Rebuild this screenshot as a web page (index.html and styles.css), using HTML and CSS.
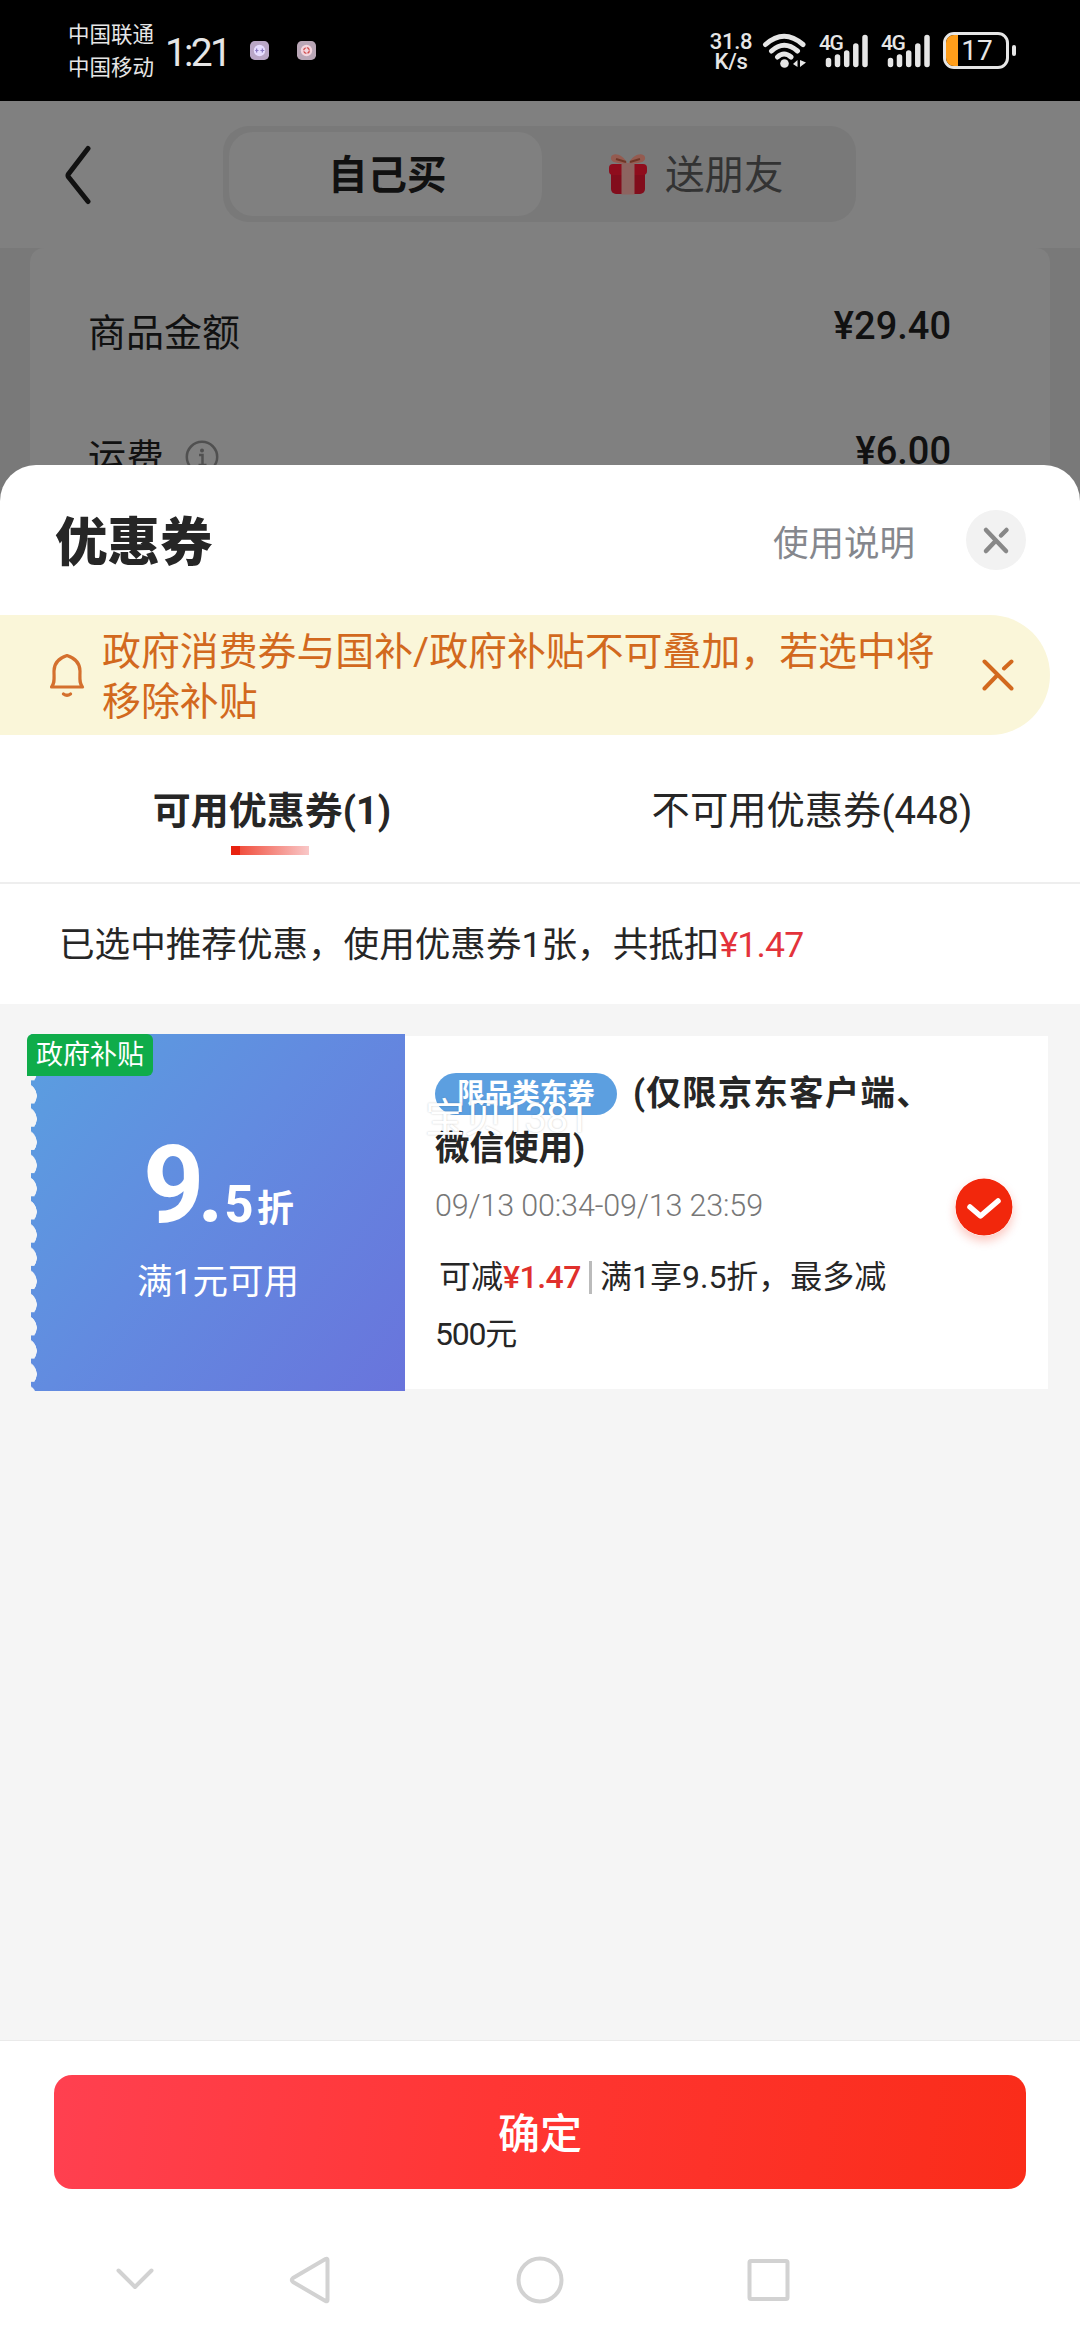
FILE: index.html
```html
<!DOCTYPE html>
<html lang="zh-CN">
<head>
<meta charset="utf-8">
<title>优惠券</title>
<link rel="stylesheet" href="styles.css">
</head>
<body>
<div class="status">
  <div class="carriers"><span>中国联通</span><span>中国移动</span></div>
  <div class="clock">1:21</div>
  <svg class="app" viewBox="0 0 20 20"><rect width="20" height="20" rx="5" fill="#b9a6c6"/><circle cx="10" cy="10" r="6" fill="#e6dcff"/><path d="M7 8v4M5.500 10h3.400M13 8v4M11 10h4" stroke="#8a79c0" stroke-width="1.300"/></svg>
  <svg class="app app-second" viewBox="0 0 20 20"><rect width="20" height="20" rx="5" fill="#b9a6b6"/><circle cx="10" cy="10" r="6" fill="#f3d5de"/><circle cx="10" cy="10" r="3" fill="none" stroke="#cf4a4a" stroke-width="1.400" stroke-dasharray="3.500 1.200"/></svg>
  <div class="speed"><span>31.8</span><span>K/s</span></div>
  <svg class="wifi" viewBox="0 0 46 36" fill="none" stroke="#e6e6e6" stroke-width="5" stroke-linecap="round"><path d="M3.500 11.500Q22 -5 41 11.500M9.500 18Q22 6.500 35.500 18M15.500 24Q22 18 29 24"/><circle cx="22.500" cy="30.500" r="4.300" fill="#e6e6e6" stroke="none"/><path d="M35.500 27v7l-4.500-3zM38 27v7l6-4.500z" fill="#e6e6e6" stroke="none"/></svg>
  <div class="cell"><span>4G</span><svg viewBox="0 0 44 34" stroke="#e6e6e6" stroke-width="5.500" stroke-linecap="round"><path d="M3.500 26.500v4M12.500 23v7.500M21.700 19v11.500M30.800 12v18.500M40 3.500v27"/></svg></div>
  <div class="cell"><span>4G</span><svg viewBox="0 0 44 34" stroke="#e6e6e6" stroke-width="5.500" stroke-linecap="round"><path d="M3.500 26.500v4M12.500 23v7.500M21.700 19v11.500M30.800 12v18.500M40 3.500v27"/></svg></div>
  <div class="battery"><div class="shell"><i></i><b>17</b></div><em></em></div>
</div>

<div class="page">
  <div class="head">
    <svg class="back" viewBox="0 0 28 60" fill="none" stroke="#111" stroke-width="5" stroke-linecap="round" stroke-linejoin="round"><path d="M24 3.500 4.500 29Q3.500 30.500 4.500 32L24 56.500"/></svg>
    <div class="segment">
      <div class="seg seg-on"><span>自己买</span></div>
      <div class="seg">
        <svg class="gift" viewBox="0 0 40 44"><rect x="3" y="17" width="34" height="25" rx="5" fill="#820d1c"/><rect x="1" y="12" width="38" height="11" rx="4" fill="#8f0d1d"/><rect x="13.500" y="11" width="13" height="31.500" fill="#8d6460"/><path d="M19 11C8 12 2 10 3 5 5 0 15 2 19 11ZM21 11c11 1 17-1 16-6-2-5-12-3-16 6Z" fill="#945b50"/><path d="M18 10 8 7M22 10l10-3" stroke="#6f3526" stroke-width="2"/></svg>
        <span>送朋友</span>
      </div>
    </div>
  </div>
  <div class="bill">
    <div class="row"><span class="label">商品金额</span><span class="amount">¥29.40</span></div>
    <div class="row row-ship"><span class="label">运费</span><svg class="info" viewBox="0 0 34 34" fill="none" stroke="#505050" stroke-width="2.500"><circle cx="17" cy="17" r="15.200"/><path d="M14 15h3.500v10M13.500 25h8"/><circle cx="17" cy="10.500" r="2" fill="#505050" stroke="none"/></svg><span class="amount">¥6.00</span></div>
  </div>
</div>

<div class="sheet">
  <div class="title-row">
    <h1>优惠券</h1>
    <span class="help">使用说明</span>
    <div class="close"><svg viewBox="0 0 60 60" fill="none" stroke="#888" stroke-width="4.500" stroke-linecap="round"><path d="M20 20 40 41M20 41 30 30.500M35 25.500 40.500 20"/></svg></div>
  </div>

  <div class="notice">
    <svg class="bell" viewBox="0 0 36 44" fill="none" stroke="#d4702e" stroke-width="3.200" stroke-linejoin="round" stroke-linecap="round"><path d="M2.500 34C6 30 5 26 5 18 5 8 12 4.500 18 2.500 24 4.500 31 8 31 18c0 8-1 12 2.500 16Z"/><path d="M14.500 41q3.500 2.500 7 0"/></svg>
    <p>政府消费券与国补/政府补贴不可叠加，若选中将<br>移除补贴</p>
    <svg class="dismiss" viewBox="0 0 32 32" fill="none" stroke="#d2691e" stroke-width="4" stroke-linecap="round"><path d="M2.500 2.500 29.500 29.500M2.500 29.500 15 16.500M22 9.500 29.500 2.500"/></svg>
  </div>

  <div class="tabs">
    <div class="tab tab-on"><span>可用优惠券(1)</span><i></i></div>
    <div class="tab"><span>不可用优惠券(448)</span></div>
  </div>

  <div class="summary">已选中推荐优惠，使用优惠券1张，共抵扣<b>¥1.47</b></div>

  <div class="list">
    <div class="coupon">
      <div class="face">
        <span class="badge">政府补贴</span>
        <div class="rate"><span class="big">9</span><span class="dot">.</span><span class="mid">5</span><span class="unit">折</span></div>
        <div class="limit">满1元可用</div>
      </div>
      <div class="detail">
        <div class="text">
          <div class="name"><span class="pill">限品类东券</span><span class="scope">(仅限京东客户端、</span><br>微信使用)</div>
          <div class="date">09/13 00:34-09/13 23:59</div>
          <div class="save"><span class="can">可减</span><b>¥1.47</b><i></i>满1享9.5折，最多减<br><span class="cap">500元</span></div>
        </div>
        <svg class="check" viewBox="0 0 58 58"><circle cx="29" cy="29" r="28.500" fill="#f2270c"/><path d="M15 29 25.500 38 43 23" fill="none" stroke="#fff" stroke-width="5.500" stroke-linecap="round" stroke-linejoin="round"/></svg>
        <span class="mark">宝贝138T</span>
      </div>
    </div>
  </div>

  <div class="footer"><div class="confirm">确定</div></div>
  <div class="nav">
    <svg viewBox="0 0 60 60"><path d="M13.500 20.500 30 37 46.500 20.500"/></svg>
    <svg viewBox="0 0 60 60"><path d="M47.500 10V50Q47.500 52 45.500 51L13 32Q10.500 30 13 28L45.500 9Q47.500 8 47.500 10Z"/></svg>
    <svg viewBox="0 0 60 60"><circle cx="30" cy="30" r="21.500"/></svg>
    <svg viewBox="0 0 60 60"><rect x="10.500" y="11" width="38" height="38" rx="1.500"/></svg>
  </div>
</div>
</body>
</html>
```
FILE: styles.css
```css
* { box-sizing: border-box; }
body {
  margin: 0;
  width: 1080px;
  height: 2340px;
  overflow: hidden;
  background: #fff;
  color: #262626;
  font-family: Roboto, "Noto Sans CJK SC", sans-serif;
  white-space: nowrap;
}
svg { display: block; flex: none; }
i, em { font-style: normal; }

.status {
  display: flex;
  align-items: flex-start;
  height: 101px;
  padding-left: 68px;
  background: #000;
  color: #e6e6e6;
}
.carriers { display: flex; flex-direction: column; width: 97px; padding-top: 18px; font-size: 21.5px; line-height: 33px; }
.clock { width: 85px; padding-top: 32px; font-size: 39px; line-height: 42px; letter-spacing: -2.800px; }
.app { width: 19px; height: 19px; margin-top: 41px; }
.app-second { margin-left: 28px; }
.speed { display: flex; flex-direction: column; align-items: center; width: 44px; margin-left: 393px; padding-top: 32px; font-size: 22px; font-weight: 500; line-height: 19.500px; letter-spacing: -.3px; }
.wifi { width: 46px; height: 36px; margin: 33px 0 0 9px; }
.cell { position: relative; width: 52px; height: 34px; margin: 34px 0 0 10px; }
.cell span { position: absolute; left: 1px; top: -2px; font-size: 21px; font-weight: 500; line-height: 22px; letter-spacing: -1.500px; }
.cell svg { width: 44px; height: 34px; margin-left: 7px; }
.battery { display: flex; align-items: center; margin: 32px 0 0 11px; }
.shell { display: flex; width: 66px; height: 37px; border: 3px solid #e6e6e6; border-radius: 11px; overflow: hidden; }
.shell i { width: 12px; background: #ff9e1b; }
.shell b { width: 38px; text-align: center; font-size: 28px; line-height: 31px; font-weight: 400; }
.battery em { width: 4px; height: 11px; margin-left: 3px; border-radius: 2px; background: #e6e6e6; }

.page { height: 400px; background: #797979; color: #111; }
.head { display: flex; align-items: flex-start; height: 147px; padding: 25px 0 0 64px; background: #808080; }
.back { width: 28px; height: 60px; margin-top: 19px; }
.segment { display: flex; width: 633px; height: 96px; margin-left: 131px; padding: 6px; border-radius: 26px; background: #797979; font-size: 39.500px; line-height: 84px; }
.seg { display: flex; justify-content: center; align-items: center; flex: 1; gap: 17px; color: #333; }
.seg span { padding-top: 3px; }
.seg-on { padding-left: 4px; border-radius: 24px; background: #808080; color: #111; font-weight: 700; }
.gift { width: 40px; height: 44px; }
.bill { height: 253px; margin: 0 30px; padding: 25px 99px 0 58px; border-radius: 14px 14px 0 0; background: #808080; }
.row { display: flex; align-items: center; height: 120px; font-size: 38px; }
.row-ship { height: 130px; }
.label { line-height: 50px; }
.info { width: 34px; height: 34px; margin: -3px auto 0 21px; }
.row .amount { margin: -15px 0 0 auto; font-weight: 500; }
.row-ship .amount { margin: -15px 0 0; }

.sheet { position: relative; height: 1875px; margin-top: -36px; border-radius: 36px 36px 0 0; background: #fff; overflow: hidden; }
.title-row { display: flex; align-items: center; height: 150px; padding: 0 54px 0 55px; }
h1 { margin: 6px 0 0; font-size: 52.500px; line-height: 60px; font-weight: 900; }
.help { margin: 0 51px 0 auto; font-size: 35.500px; color: #85878d; }
.close { width: 60px; height: 60px; border-radius: 50%; background: #f2f2f2; }

.notice { display: flex; align-items: center; width: 1050px; height: 120px; padding-left: 49px; border-radius: 0 60px 60px 0; background: #faf6d9; color: #d2691e; }
.bell { width: 36px; height: 44px; }
.notice p { width: 880px; margin: 4px 0 0 17px; font-size: 38.900px; line-height: 50px; }
.dismiss { width: 32px; height: 32px; }

.tabs { display: flex; height: 149px; border-bottom: 2px solid #eee; font-size: 38.300px; }
.tab { display: flex; flex-direction: column; align-items: center; width: 50%; padding: 51px 0 0 4px; line-height: 50px; }
.tab-on { font-weight: 700; font-size: 38px; }
.tab i { width: 78px; height: 9px; margin: 10px 4px 0 0; background: linear-gradient(90deg, #e8220f 9px, #f1503f 9px, #f9c8c8); }
.summary { height: 120px; padding-left: 59px; font-size: 35.600px; line-height: 123px; }
.summary b { font-weight: 400; color: #e3333b; letter-spacing: -.8px; }

.list { height: 1037px; padding: 30px 32px 0 31px; border-bottom: 1px solid #eaeaea; background: #f5f5f5; }
.coupon { display: flex; align-items: center; height: 357px; }
.face {
  position: relative;
  width: 374px;
  height: 357px;
  padding-top: 96px;
  background:
    radial-gradient(circle 13px at -7px 15.500px, #f5f5f5 12.500px, transparent 13px) 0 0 / 100% 23.200px,
    linear-gradient(128deg, #5a9fe0, #628be0 45%, #6974dc);
  color: #fff;
  text-align: center;
}
.badge { position: absolute; left: -4px; top: 0; width: 126px; height: 42px; border-radius: 6px 6px 6px 0; background: #0fac4a; font-size: 27px; line-height: 42px; }
.rate { display: flex; align-items: baseline; height: 104px; padding-left: 112px; font-weight: 700; }
.rate span { line-height: 112px; }
.big { width: 50px; font-size: 107px; text-align: left; }
.dot { width: 27px; font-size: 86px; margin-left: 4px; }
.mid { font-size: 51px; width: 30px; }
.unit { font-size: 37px; margin-left: 3px; }
.limit { margin-top: 23px; font-size: 35.500px; line-height: 50px; }
.detail { position: relative; display: flex; align-items: flex-start; flex: 1; height: 353px; padding-left: 30px; background: #fff; }
.text { width: 520px; }
.name { padding-top: 30px; font-size: 34.500px; font-weight: 700; line-height: 55px; }
.scope { letter-spacing: 1.200px; }
.pill { display: inline-block; width: 182px; height: 42px; margin-right: 16px; border-radius: 21px; background: #5c9fe0; color: #fff; font-size: 27.500px; line-height: 41px; text-align: center; vertical-align: 2px; }
.date { margin-top: 5px; font-size: 30.500px; font-weight: 300; line-height: 50px; letter-spacing: -.15px; color: #777; }
.save { margin-top: 18px; font-size: 32px; line-height: 57px; }
.save b { font-weight: 500; color: #e0302c; letter-spacing: -.5px; }
.save i { display: inline-block; width: 3px; height: 33px; margin: 0 8px; background: #bbb; vertical-align: -6px; }
.can { padding-left: 4px; }
.cap { letter-spacing: -1.200px; }
.check { width: 58px; height: 58px; margin-top: 142px; border-radius: 50%; box-shadow: 0 5px 10px rgba(242, 39, 12, .25); }
.mark { position: absolute; left: 20px; top: 58px; font-size: 40px; font-weight: 400; line-height: 50px; letter-spacing: -1px; color: #fff; text-shadow: 0 0 2px rgba(0, 0, 0, .22); }

.footer { padding: 34px 54px 0; }
.confirm { height: 114px; border-radius: 18px; background: linear-gradient(97deg, #ff4050, #ff3634 45%, #fa2c19); color: #fff; font-size: 42px; font-weight: 500; line-height: 119px; text-align: center; }
.nav { display: grid; grid-template-columns: 175px 230px 229px 60px; padding: 61px 0 0 105px; }
.nav svg { width: 60px; height: 60px; fill: none; stroke: #d2d2d2; stroke-width: 4; stroke-linecap: round; stroke-linejoin: round; }
```
